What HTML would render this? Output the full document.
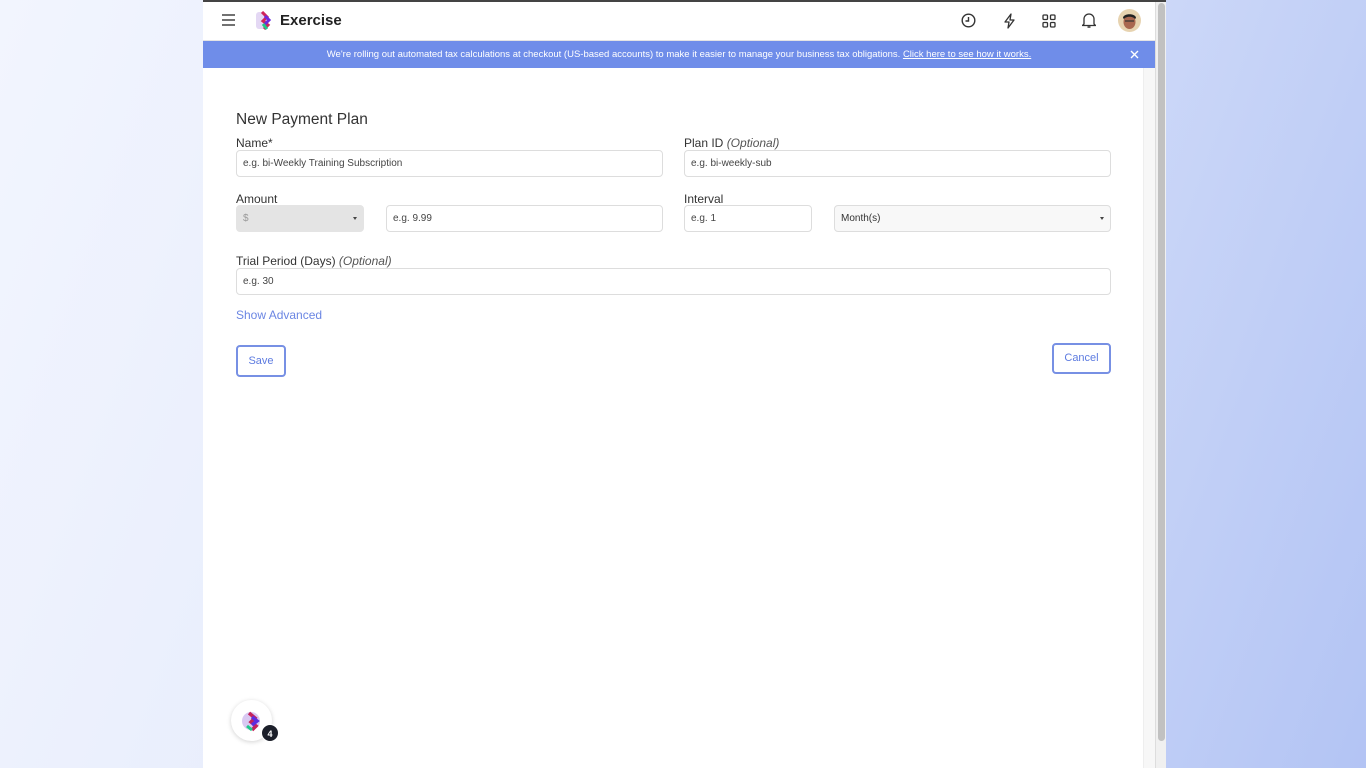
<!DOCTYPE html>
<html><head><meta charset="utf-8"><style>
*{box-sizing:border-box;margin:0;padding:0}
body{width:1366px;height:768px;overflow:hidden;font-family:"Liberation Sans",sans-serif;background:linear-gradient(110deg,#f2f5fe 0%,#e6ecfc 40%,#b3c4f4 100%);position:relative}
.win{position:absolute;left:203px;top:0;width:963px;height:768px;background:#fff}
.tb{position:absolute;left:0;top:0;width:963px;height:2px;background:#444;z-index:5}
.top{position:absolute;left:0;top:0;width:952px;height:41px;border-bottom:1px solid #e4e4e4}
.banner{position:absolute;left:0;top:41px;width:952px;height:27px;background:#6f8de9;color:#fff;font-size:9.5px;text-align:center;line-height:27px}
.banner u{color:#fff}
.sb{position:absolute;left:952px;top:0;width:11px;height:768px;background:#f0f0f0;border-left:1px solid #ddd}
.sb div{position:absolute;left:2px;top:3px;width:7px;height:738px;background:#c1c1c1;border-radius:4px}
.strip{position:absolute;left:940px;top:68px;width:12px;height:700px;background:#f7f7f7;border-left:1px solid #eee}
.abs{position:absolute}
.lbl{position:absolute;font-size:12px;color:#333}
.lbl i{color:#555}
.inp{position:absolute;height:27px;border:1px solid #ddd;border-radius:4px;font-size:10px;color:#444;padding-left:6px;line-height:25px;background:#fff}
.btn{position:absolute;border:2px solid #7790e4;border-radius:4px;color:#5d7be0;font-size:11px;text-align:center;background:#fff}
.caret{position:absolute;right:6px;top:11px;border-left:2.5px solid transparent;border-right:2.5px solid transparent;border-top:3px solid #444}
</style></head><body>
<div class="win">
 <div class="tb"></div>
 <div class="top">
  <svg class="abs" style="left:19px;top:14px" width="14" height="12"><path d="M0 1h13M0 6h13M0 11h13" stroke="#444" stroke-width="1.5"/></svg>
  <svg class="abs" style="left:53px;top:11px" width="18" height="19" viewBox="0 0 18 19">
   <rect x="0" y="1" width="10" height="17" rx="3" fill="#d8c8f0" opacity=".7"/>
   <path d="M6 1l5 5-4 4 5 4-4 4" stroke="#d0245a" stroke-width="3" fill="none"/>
   <path d="M9 5l4 4-4 4" stroke="#6a2be0" stroke-width="3" fill="none"/>
   <path d="M7 13l4 5" stroke="#1ec98a" stroke-width="3"/>
  </svg>
  <div class="abs" style="left:77px;top:12px;font-size:15px;font-weight:bold;color:#222">Exercise</div>
  <svg class="abs" style="left:758px;top:13px" width="15" height="15" viewBox="0 0 15 15"><circle cx="7.5" cy="7.5" r="6.3" fill="none" stroke="#333" stroke-width="1.4"/><path d="M7.5 4v4h-3" stroke="#333" stroke-width="1.4" fill="none"/></svg>
  <svg class="abs" style="left:800px;top:13px" width="12" height="16" viewBox="0 0 12 16"><path d="M8 1L2 9h4l-1 6 6-8H7z" fill="none" stroke="#333" stroke-width="1.3" stroke-linejoin="round"/></svg>
  <svg class="abs" style="left:839px;top:14px" width="14" height="14" viewBox="0 0 14 14" fill="none" stroke="#333" stroke-width="1.3"><rect x="1" y="1" width="4.5" height="4.5" rx="1"/><rect x="8.5" y="1" width="4.5" height="4.5" rx="1"/><rect x="1" y="8.5" width="4.5" height="4.5" rx="1"/><rect x="8.5" y="8.5" width="4.5" height="4.5" rx="1"/></svg>
  <svg class="abs" style="left:879px;top:12px" width="14" height="17" viewBox="0 0 14 17"><path d="M2 12V7a5 5 0 0110 0v5l1.5 1.5h-13z" fill="none" stroke="#333" stroke-width="1.3" stroke-linejoin="round"/><path d="M5.5 15h3" stroke="#333" stroke-width="1.5"/></svg>
  <svg class="abs" style="left:915px;top:9px" width="23" height="23" viewBox="0 0 23 23"><circle cx="11.5" cy="11.5" r="11.5" fill="#e7d3b0"/><ellipse cx="11.5" cy="13" rx="6" ry="7" fill="#a9674f"/><path d="M5 9c0-5 13-5 13 0l-1 1c-2-3-9-3-11 0z" fill="#222"/><rect x="7" y="11" width="9" height="2" fill="#333" opacity=".6"/></svg>
 </div>
 <div class="banner">We're rolling out automated tax calculations at checkout (US-based accounts) to make it easier to manage your business tax obligations. <u>Click here to see how it works.</u>
  <svg class="abs" style="left:927px;top:9px" width="9" height="9"><path d="M1 1l7 7M8 1L1 8" stroke="#fff" stroke-width="1.4"/></svg>
 </div>
 <div class="strip"></div>
 <div class="sb"><div></div></div>

 <div class="abs" style="left:33px;top:111px;font-size:15.5px;color:#333">New Payment Plan</div>
 <div class="lbl" style="left:33px;top:136px">Name*</div>
 <div class="inp" style="left:33px;top:150px;width:427px">e.g. bi-Weekly Training Subscription</div>
 <div class="lbl" style="left:481px;top:136px">Plan ID <i>(Optional)</i></div>
 <div class="inp" style="left:481px;top:150px;width:427px">e.g. bi-weekly-sub</div>

 <div class="lbl" style="left:33px;top:192px">Amount</div>
 <div class="inp" style="left:33px;top:205px;width:128px;background:#e4e4e4;color:#999;border-color:#e4e4e4">$<span class="caret"></span></div>
 <div class="inp" style="left:183px;top:205px;width:277px">e.g. 9.99</div>
 <div class="lbl" style="left:481px;top:192px">Interval</div>
 <div class="inp" style="left:481px;top:205px;width:128px">e.g. 1</div>
 <div class="inp" style="left:631px;top:205px;width:277px;background:#f8f8f8;color:#333">Month(s)<span class="caret"></span></div>

 <div class="lbl" style="left:33px;top:254px">Trial Period (Days) <i>(Optional)</i></div>
 <div class="inp" style="left:33px;top:268px;width:875px">e.g. 30</div>
 <div class="abs" style="left:33px;top:308px;font-size:12px;color:#6b86e3">Show Advanced</div>
 <div class="btn" style="left:33px;top:345px;width:50px;height:32px;line-height:28px">Save</div>
 <div class="btn" style="left:849px;top:343px;width:59px;height:31px;line-height:27px">Cancel</div>

 <div class="abs" style="left:28px;top:700px;width:41px;height:41px;border-radius:50%;background:#fff;box-shadow:0 1px 5px rgba(0,0,0,.18)">
  <svg class="abs" style="left:10px;top:10px" width="22" height="22" viewBox="0 0 22 22"><circle cx="10" cy="11" r="9" fill="#d9c9f2"/><path d="M8 3l6 5-4 4 5 4-4 4" stroke="#c4235b" stroke-width="3.5" fill="none"/><path d="M11 7l5 4-5 4" stroke="#5b2de0" stroke-width="3.5" fill="none"/><path d="M6 16l5 4" stroke="#20c98b" stroke-width="3"/></svg>
 </div>
 <div class="abs" style="left:58px;top:724px;width:18px;height:18px;border-radius:50%;background:#1c1f2a;color:#fff;font-size:9px;font-weight:bold;text-align:center;line-height:18px;border:1px solid #fff">4</div>
</div>
</body></html>
